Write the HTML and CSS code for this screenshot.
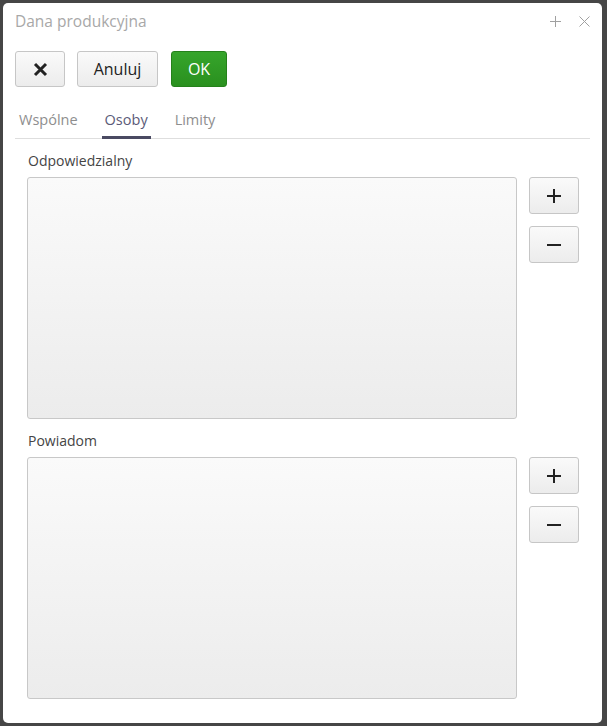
FILE: index.html
```html
<!DOCTYPE html>
<html lang="pl">
<head>
  <meta charset="UTF-8">
  <title>Dana produkcyjna</title>
  <link rel="stylesheet" href="styles.css">
</head>
<body>
  <div class="dialog">
    <div class="titlebar">
      <span class="title">Dana produkcyjna</span>
      <div class="win-controls">
        <svg width="11" height="11" viewBox="0 0 11 11"><path d="M5.5 0V11M0 5.5H11" stroke="#a0a0a0" stroke-width="1"/></svg>
        <svg width="11" height="11" viewBox="0 0 11 11"><path d="M0.5 0.5L10.5 10.5M10.5 0.5L0.5 10.5" stroke="#a0a0a0" stroke-width="1"/></svg>
      </div>
    </div>

    <div class="toolbar">
      <button class="btn btn-icon">
        <svg width="15" height="15" viewBox="0 0 15 15"><path d="M2 2L13 13M13 2L2 13" stroke="#222" stroke-width="3"/></svg>
      </button>
      <button class="btn btn-text">Anuluj</button>
      <button class="btn btn-ok">OK</button>
    </div>

    <div class="tabs">
      <div class="tab">Wspólne</div>
      <div class="tab active">Osoby</div>
      <div class="tab">Limity</div>
    </div>

    <div class="content">
      <div class="group">
        <label>Odpowiedzialny</label>
        <div class="list-row">
          <div class="listbox"></div>
          <div class="side-buttons">
            <button class="btn btn-side"><svg width="14" height="14" viewBox="0 0 14 14"><path d="M7 0V14M0 7H14" stroke="#222" stroke-width="2"/></svg></button>
            <button class="btn btn-side"><svg width="14" height="14" viewBox="0 0 14 14"><path d="M0 7H14" stroke="#222" stroke-width="2"/></svg></button>
          </div>
        </div>
      </div>

      <div class="group">
        <label>Powiadom</label>
        <div class="list-row">
          <div class="listbox"></div>
          <div class="side-buttons">
            <button class="btn btn-side"><svg width="14" height="14" viewBox="0 0 14 14"><path d="M7 0V14M0 7H14" stroke="#222" stroke-width="2"/></svg></button>
            <button class="btn btn-side"><svg width="14" height="14" viewBox="0 0 14 14"><path d="M0 7H14" stroke="#222" stroke-width="2"/></svg></button>
          </div>
        </div>
      </div>
    </div>
  </div>
</body>
</html>
```

FILE: styles.css
```css
body {
  margin: 0;
  background: #464646;
  font-family: 'Open Sans', sans-serif;
}
.dialog {
  margin: 3px;
  width: 599px;
  height: 720px;
  box-sizing: border-box;
  background: white;
  border-radius: 5px;
  padding: 0 12px;
}
.titlebar {
  height: 36px;
  display: flex;
  align-items: center;
  justify-content: space-between;
}
.title {
  font-size: 15.5px;
  color: #a8a8a8;
}
.win-controls {
  display: flex;
  gap: 18px;
  margin-right: 0;
}
.win-controls svg {
  display: block;
}
.toolbar {
  display: flex;
  gap: 12px;
  margin-top: 12px;
}
.btn {
  height: 36px;
  border: 1px solid #c6c6c6;
  border-radius: 3px;
  background: linear-gradient(#fafafa, #ececec);
  font-family: 'Open Sans', sans-serif;
  font-size: 16px;
  color: #222;
  padding: 0;
  display: flex;
  align-items: center;
  justify-content: center;
  cursor: pointer;
}
.btn svg {
  display: block;
}
.btn-icon {
  width: 50px;
}
.btn-text {
  width: 81px;
}
.btn-ok {
  width: 56px;
  margin-left: 1px;
  background: linear-gradient(#36a52b, #2a901f);
  border-color: #25811b;
  color: white;
}
.tabs {
  display: flex;
  gap: 21px;
  margin-top: 16px;
  border-bottom: 1px solid #dedede;
  padding-left: 1px;
}
.tab {
  font-size: 14.5px;
  line-height: 20px;
  color: #8e8e8e;
  padding: 7px 3px 6px;
  margin-bottom: -1px;
  border-bottom: 3px solid transparent;
}
.tab.active {
  color: #5b5b78;
  border-bottom-color: #4a4a62;
}
.content {
  padding: 12px 11px 0 12px;
}
.group + .group {
  margin-top: 12px;
}
.group label {
  display: block;
  font-size: 14px;
  line-height: 20px;
  color: #444;
  padding-left: 1px;
}
.list-row {
  display: flex;
  gap: 12px;
  margin-top: 6px;
}
.listbox {
  width: 490px;
  height: 242px;
  box-sizing: border-box;
  border: 1px solid #c8c8c8;
  border-radius: 3px;
  background: linear-gradient(#fafafa, #ececec);
}
.side-buttons {
  display: flex;
  flex-direction: column;
  gap: 12px;
}
.btn-side {
  width: 50px;
  height: 37px;
}
```
